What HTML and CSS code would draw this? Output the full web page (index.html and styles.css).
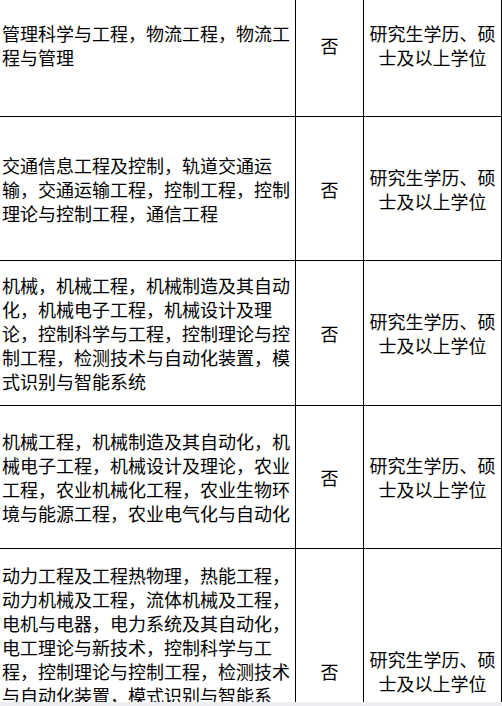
FILE: index.html
```html
<!DOCTYPE html>
<html lang="zh-CN">
<head>
<meta charset="utf-8">
<title>专业要求</title>
<link rel="stylesheet" href="styles.css">
</head>
<body>
<div class="sheet">
  <div class="cell major">管理科学与工程，物流工程，物流工程与管理</div>
  <div class="cell mid">否</div>
  <div class="cell mid">研究生学历、硕士及以上学位</div>

  <div class="cell major">交通信息工程及控制，轨道交通运输，交通运输工程，控制工程，控制理论与控制工程，通信工程</div>
  <div class="cell mid">否</div>
  <div class="cell mid">研究生学历、硕士及以上学位</div>

  <div class="cell major">机械，机械工程，机械制造及其自动化，机械电子工程，机械设计及理论，控制科学与工程，控制理论与控制工程，检测技术与自动化装置，模式识别与智能系统</div>
  <div class="cell mid">否</div>
  <div class="cell mid">研究生学历、硕士及以上学位</div>

  <div class="cell major">机械工程，机械制造及其自动化，机械电子工程，机械设计及理论，农业工程，农业机械化工程，农业生物环境与能源工程，农业电气化与自动化</div>
  <div class="cell mid">否</div>
  <div class="cell mid">研究生学历、硕士及以上学位</div>

  <div class="cell major">动力工程及工程热物理，热能工程，动力机械及工程，流体机械及工程，电机与电器，电力系统及其自动化，电工理论与新技术，控制科学与工程，控制理论与控制工程，检测技术与自动化装置，模式识别与智能系统，电力电子与电力传动，高电压与绝缘技术，电气工程及其自动化，能源与动力工程</div>
  <div class="cell mid">否</div>
  <div class="cell mid">研究生学历、硕士及以上学位</div>
</div>
<div class="scroll-edge"></div>
</body>
</html>
```

FILE: styles.css
```css
html, body {
  margin: 0;
  padding: 0;
  background: #ffffff;
}

body {
  width: 502px;
  height: 706px;
  overflow: hidden;
  font-family: "Noto Sans CJK SC", "Noto Sans", sans-serif;
  font-size: 18px;
  line-height: 24px;
  color: #000000;
}

.sheet {
  display: grid;
  grid-template-columns: 296px 68px 138px;
  grid-template-rows: 144px 144px 145px 143px 245px;
  margin-top: -27px;
}

.cell {
  box-sizing: border-box;
  border-right: 1px solid #000;
  border-bottom: 1px solid #000;
  display: flex;
  align-items: center;
  overflow: hidden;
}

.major {
  padding: 0 3px 0 2px;
}

.mid {
  justify-content: center;
  text-align: center;
}

.scroll-edge {
  position: fixed;
  left: 0;
  right: 0;
  bottom: 0;
  height: 4px;
  background: #edeff2;
}
```
